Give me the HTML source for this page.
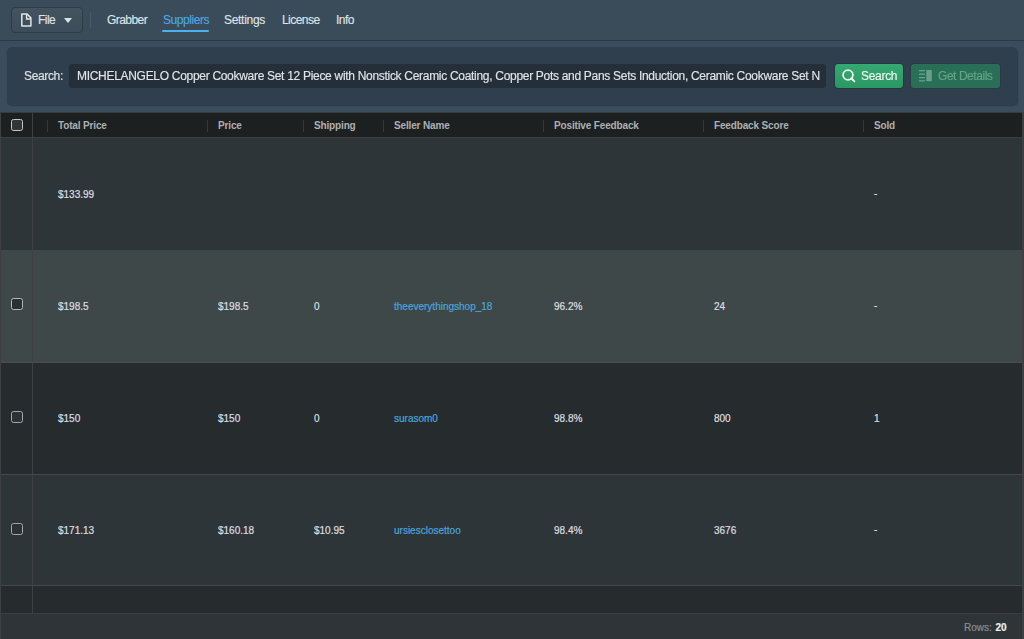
<!DOCTYPE html>
<html><head><meta charset="utf-8">
<style>
*{box-sizing:border-box;margin:0;padding:0}
html,body{width:1024px;height:639px;overflow:hidden;background:#3b4c5c;font-family:"Liberation Sans",sans-serif}
.abs{position:absolute}
#toolbar{position:absolute;left:0;top:0;width:1024px;height:41px;background:#3a4b5a;border-bottom:1px solid #2d3945}
#filebtn{position:absolute;left:11px;top:7px;width:72px;height:26px;border:1px solid #2f3c48;border-radius:4px;background:linear-gradient(#43535f,#3c4c5a)}
.nav{position:absolute;top:13px;font-size:12px;color:#dfe3e7;letter-spacing:-0.55px;white-space:nowrap;line-height:14px;-webkit-text-stroke:0.15px currentColor}
#sep{position:absolute;left:90px;top:12px;width:1px;height:16px;background:#4b5a68}
#panel{position:absolute;left:7px;top:47px;width:1010px;height:58px;background:#2f3f4d;border-radius:5px;box-shadow:0.5px 1px 1px rgba(20,28,36,.35)}
#input{position:absolute;left:69px;top:64px;width:757px;height:24px;background:#252f39;border-radius:3px;overflow:hidden}
#input>span{position:absolute;left:8px;top:5px;width:743px;overflow:hidden;font-size:12px;color:#e1e5e8;letter-spacing:-0.3px;white-space:nowrap;line-height:14px;-webkit-text-stroke:0.15px currentColor}
.btn{position:absolute;top:64px;height:24px;border-radius:3px}
#grid{position:absolute;left:0;top:112px;width:1024px;height:527px;background:#262b2e;border-left:1px solid #3d3f40;border-right:2px solid #3d3f40;border-top:1px solid #3a3b3b}
.hdr{position:absolute;left:0;top:0;width:1021px;height:25px;background:#1d2021;border-bottom:1px solid #3c3e3f}
.hd{position:absolute;top:7px;font-size:10px;font-weight:bold;color:#adb0b2;white-space:nowrap;line-height:12px;letter-spacing:-0.15px}
.hs{position:absolute;top:7px;width:1px;height:12px;background:#35383a}
.row{position:absolute;left:0;width:1021px}
.cell{position:absolute;font-size:10px;color:#dcdfe1;white-space:nowrap;line-height:12px;-webkit-text-stroke:0.2px currentColor}
.link{color:#4ca4da}
.cb{position:absolute;left:10px;width:12px;height:12px;border:1.5px solid #a3a7a9;border-radius:2.5px;background:#2b3134}
.vline{position:absolute;left:31px;width:1px;background:#3e4143}
#footer{position:absolute;left:0;top:500px;width:1021px;height:26px;background:#2e3437;border-top:1px solid #3b3d3e}
</style></head><body><div id="wrap" style="position:absolute;left:0;top:0;width:1024px;height:639px;filter:blur(0.3px)">
<div id="toolbar">
  <div id="filebtn"></div>
  <svg class="abs" style="left:21px;top:13px" width="11" height="14" viewBox="0 0 11 14"><path d="M0.8 1 H6 L9.9 4.9 V13 H0.8 Z" fill="none" stroke="#e1e5e8" stroke-width="1.5" stroke-linejoin="round"/><path d="M5.6 1 V6 H9.9" fill="none" stroke="#e1e5e8" stroke-width="1.4"/></svg>
  <div class="nav" style="left:38px;font-weight:normal">File</div>
  <svg class="abs" style="left:64px;top:18px" width="8" height="5" viewBox="0 0 8 5"><path d="M0 0 H8 L4 5 Z" fill="#dfe3e7"/></svg>
  <div id="sep"></div>
  <div class="nav" style="left:107px">Grabber</div>
  <div class="nav" style="left:163px;color:#4ca8e2;letter-spacing:-0.45px">Suppliers</div>
  <div class="abs" style="left:162px;top:30px;width:47px;height:2px;background:#4cb0ee;border-radius:1px"></div>
  <div class="nav" style="left:224px;letter-spacing:-0.3px">Settings</div>
  <div class="nav" style="left:282px">License</div>
  <div class="nav" style="left:336px">Info</div>
</div>
<div id="panel"></div>
<div class="nav" style="left:24px;top:69px;letter-spacing:-0.35px">Search:</div>
<div id="input"><span>MICHELANGELO Copper Cookware Set 12 Piece with Nonstick Ceramic Coating, Copper Pots and Pans Sets Induction, Ceramic Cookware Set N</span></div>
<div class="btn" style="left:834px;top:63px;width:70px;height:26px;border:1px solid #29363f;border-radius:4px;background:linear-gradient(#35a972,#299862)"></div>
<svg class="abs" style="left:842px;top:69px" width="15" height="15" viewBox="0 0 15 15"><circle cx="6" cy="6" r="4.9" fill="none" stroke="#eef5f1" stroke-width="1.75"/><path d="M9.3 9.3 L12.4 12.4" stroke="#eef5f1" stroke-width="2" stroke-linecap="round"/></svg>
<div class="nav" style="left:861px;top:69px;color:#eef5f1;letter-spacing:-0.3px">Search</div>
<div class="btn" style="left:910px;top:63px;width:91px;height:26px;border:1px solid #2c3a44;border-radius:4px;background:#296f58"></div>
<svg class="abs" style="left:919px;top:70px" width="14" height="12" viewBox="0 0 14 12"><g fill="#67a18b"><rect x="0" y="0" width="6" height="1.3"/><rect x="0" y="3.5" width="6" height="1.3"/><rect x="0" y="7" width="6" height="1.3"/><rect x="0" y="10.2" width="6" height="1.3"/><rect x="7.3" y="0" width="5.5" height="11.3" rx="0.8"/></g></svg>
<div class="nav" style="left:938px;top:69px;color:#64a487;letter-spacing:-0.45px">Get Details</div>

<div id="grid">
  <div class="hdr">
    <div class="cb" style="top:6px;border-color:#c4c6c7;background:#333637"></div>
    <div class="vline" style="top:0;height:25px"></div>
    <div class="hs" style="left:46px"></div>
    <div class="hd" style="left:57px">Total Price</div>
    <div class="hs" style="left:206px"></div>
    <div class="hd" style="left:217px">Price</div>
    <div class="hs" style="left:302px"></div>
    <div class="hd" style="left:313px">Shipping</div>
    <div class="hs" style="left:382px"></div>
    <div class="hd" style="left:393px">Seller Name</div>
    <div class="hs" style="left:542px"></div>
    <div class="hd" style="left:553px">Positive Feedback</div>
    <div class="hs" style="left:702px"></div>
    <div class="hd" style="left:713px">Feedback Score</div>
    <div class="hs" style="left:862px"></div>
    <div class="hd" style="left:873px">Sold</div>
  </div>
  <div class="row" style="top:25px;height:112px;background:#2e3538">
    <div class="vline" style="top:0;height:112px"></div>
    <div class="cell" style="left:57px;top:51px">$133.99</div>
    <div class="cell" style="left:873px;top:50px">-</div>
  </div>
  <div class="row" style="top:137px;height:113px;background:#3e4849;border-bottom:1px solid #494d4f">
    <div class="vline" style="top:0;height:112px;background:#3d4143"></div>
    <div class="cb" style="top:48px;background:#2c3234;border-color:#b3b8ba"></div>
    <div class="cell" style="left:57px;top:51px">$198.5</div>
    <div class="cell" style="left:217px;top:51px">$198.5</div>
    <div class="cell" style="left:313px;top:51px">0</div>
    <div class="cell link" style="left:393px;top:51px">theeverythingshop_18</div>
    <div class="cell" style="left:553px;top:51px">96.2%</div>
    <div class="cell" style="left:713px;top:51px">24</div>
    <div class="cell" style="left:873px;top:50px">-</div>
  </div>
  <div class="row" style="top:250px;height:112px;background:#262b2e;border-bottom:1px solid #46494b">
    <div class="vline" style="top:0;height:111px"></div>
    <div class="cb" style="top:48px"></div>
    <div class="cell" style="left:57px;top:50px">$150</div>
    <div class="cell" style="left:217px;top:50px">$150</div>
    <div class="cell" style="left:313px;top:50px">0</div>
    <div class="cell link" style="left:393px;top:50px">surasom0</div>
    <div class="cell" style="left:553px;top:50px">98.8%</div>
    <div class="cell" style="left:713px;top:50px">800</div>
    <div class="cell" style="left:873px;top:50px">1</div>
  </div>
  <div class="row" style="top:362px;height:111px;background:#2e3538;border-bottom:1px solid #46494b">
    <div class="vline" style="top:0;height:110px"></div>
    <div class="cb" style="top:48px"></div>
    <div class="cell" style="left:57px;top:50px">$171.13</div>
    <div class="cell" style="left:217px;top:50px">$160.18</div>
    <div class="cell" style="left:313px;top:50px">$10.95</div>
    <div class="cell link" style="left:393px;top:50px">ursiesclosettoo</div>
    <div class="cell" style="left:553px;top:50px">98.4%</div>
    <div class="cell" style="left:713px;top:50px">3676</div>
    <div class="cell" style="left:873px;top:49px">-</div>
  </div>
  <div class="row" style="top:473px;height:27px;background:#262b2e">
    <div class="vline" style="top:0;height:27px"></div>
  </div>
  <div id="footer">
    <div class="cell" style="left:963px;top:8px;color:#8a8e91">Rows: <b style="color:#eceeef;margin-left:1px">20</b></div>
  </div>
</div>
</div></body></html>
